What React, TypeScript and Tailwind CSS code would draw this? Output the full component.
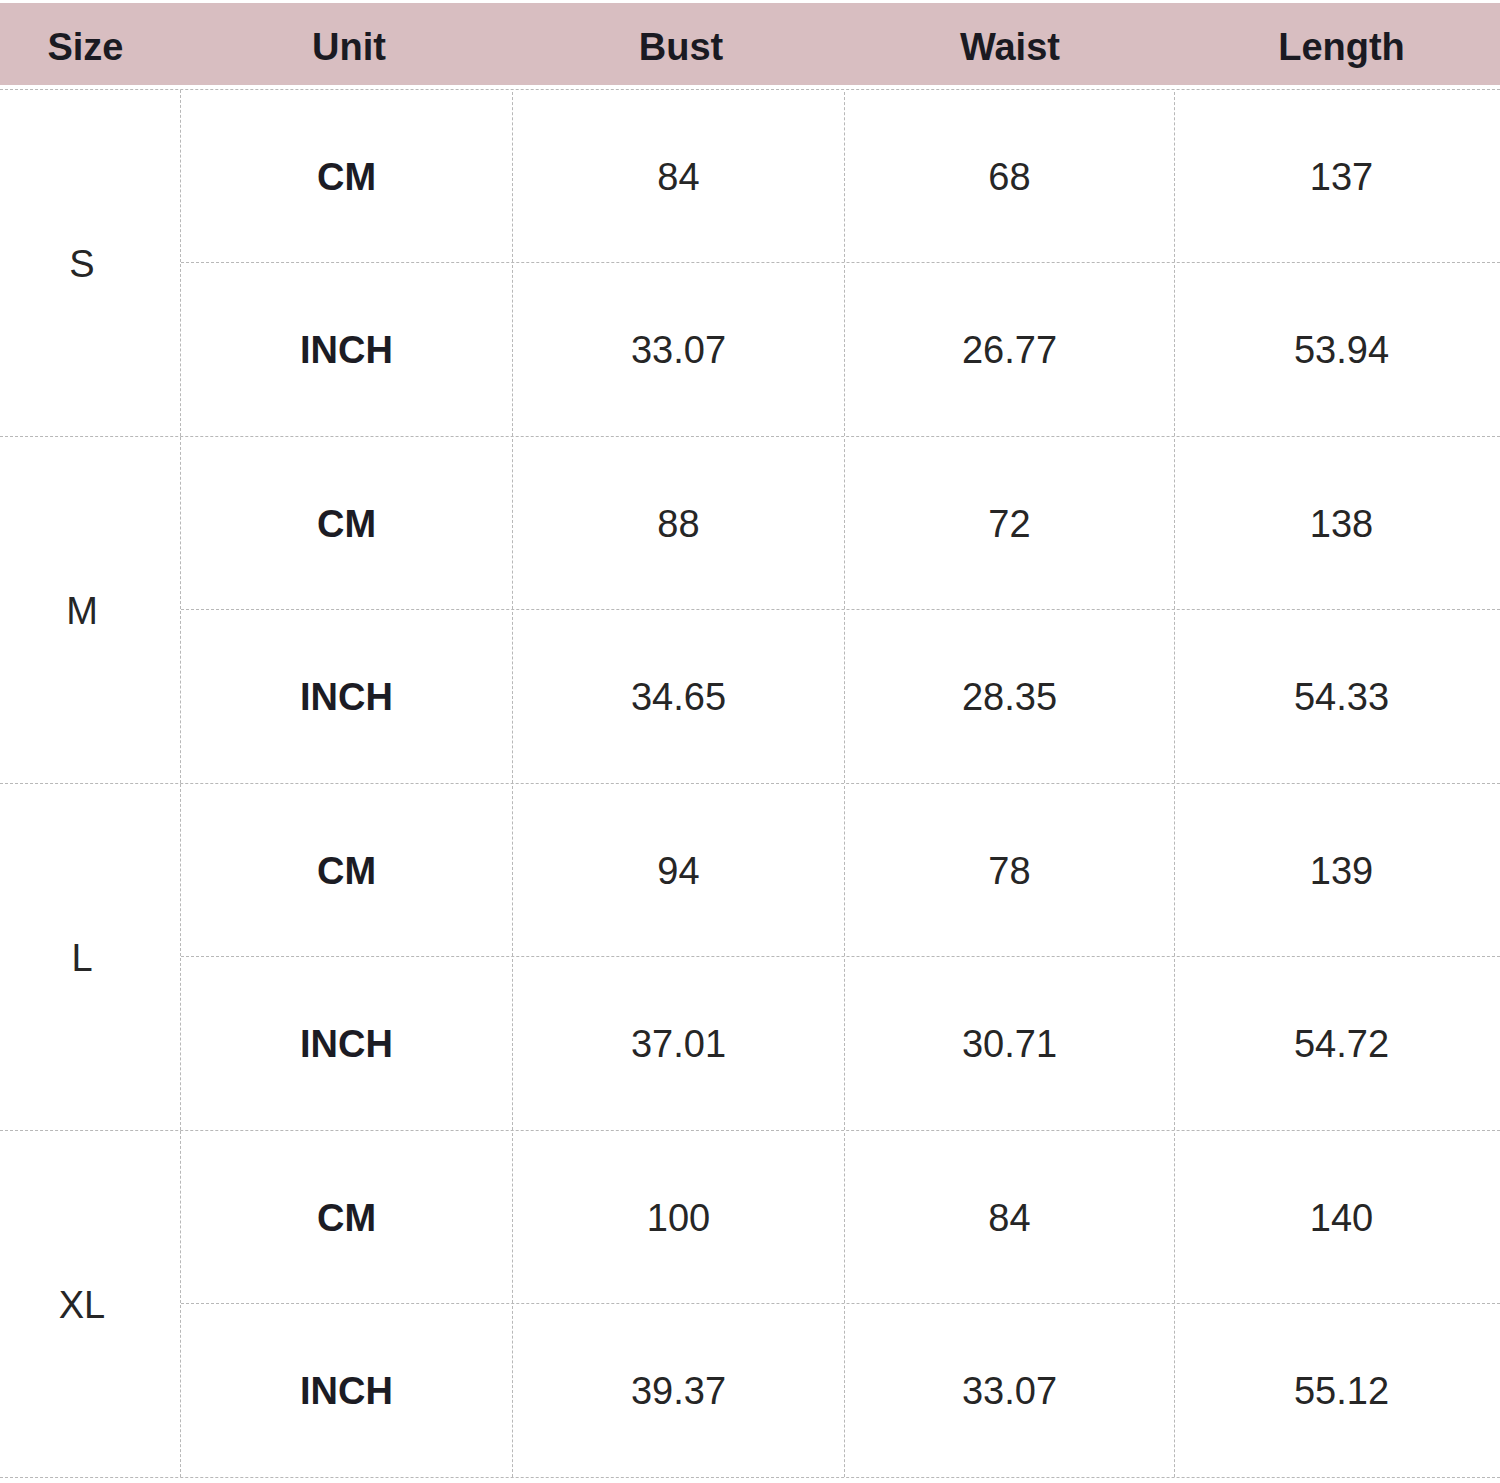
const headers = ["Size", "Unit", "Bust", "Waist", "Length"];

const rows = [
  { size: "S", cm: ["84", "68", "137"], inch: ["33.07", "26.77", "53.94"] },
  { size: "M", cm: ["88", "72", "138"], inch: ["34.65", "28.35", "54.33"] },
  { size: "L", cm: ["94", "78", "139"], inch: ["37.01", "30.71", "54.72"] },
  { size: "XL", cm: ["100", "84", "140"], inch: ["39.37", "33.07", "55.12"] },
];

const cols = "grid grid-cols-[332px_332px_330px_325px]";
const line = "border-dashed border-[#b8b8b8]";

// header labels sit a touch off the column centre in the source image
const headerPad = ["pr-[10px]", "pl-[4px]", "pl-[4px]", "", "pl-[8px]"];

function UnitRow({ unit, values, last }: { unit: string; values: string[]; last?: boolean }) {
  return (
    <div className={`${cols} h-[173px] pt-[2px] ${last ? "" : `border-b ${line}`}`}>
      <div className={`flex items-center justify-center border-r ${line} font-bold text-[#1c1c24]`}>
        {unit}
      </div>
      {values.map((v, i) => (
        <div
          key={i}
          className={`flex items-center justify-center ${i < 2 ? `border-r ${line}` : "pl-[8px]"}`}
        >
          {v}
        </div>
      ))}
    </div>
  );
}

export default function App() {
  return (
    <div className="h-[1483px] w-[1500px] bg-white pt-[3px] font-['Liberation_Sans',Arial,sans-serif] text-[38px] text-[#262626]">
      <div className="grid h-[82px] grid-cols-[181px_332px_332px_330px_325px] bg-[#d8bec1] font-bold text-[#1a1a22]">
        {headers.map((h, i) => (
          <div key={h} className={`flex items-center justify-center pt-[6px] ${headerPad[i]}`}>
            {h}
          </div>
        ))}
      </div>
      <div className={`mt-[4px] border-t ${line}`}>
        {rows.map((r) => (
          <div key={r.size} className={`flex h-[347px] border-b ${line}`}>
            <div className={`flex w-[181px] items-center justify-center border-r ${line} pr-[16px] pt-[2px]`}>
              {r.size}
            </div>
            <div className="flex flex-col">
              <UnitRow unit="CM" values={r.cm} />
              <UnitRow unit="INCH" values={r.inch} last />
            </div>
          </div>
        ))}
      </div>
    </div>
  );
}
